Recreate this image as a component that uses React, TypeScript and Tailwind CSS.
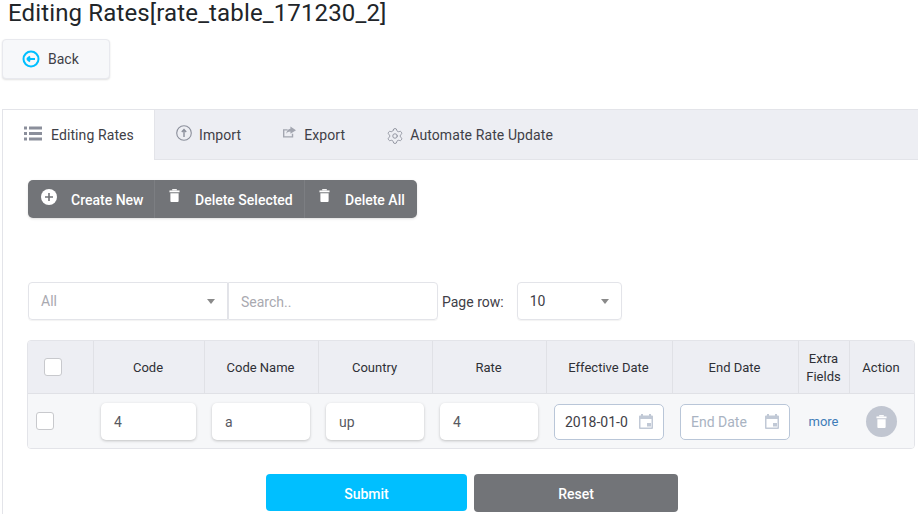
import { Settings } from "lucide-react";

const COLS = "grid grid-cols-[66px_111px_114px_114px_114px_126px_126px_51px_1fr]";

const TrashIcon = ({ className }: { className?: string }) => (
  <svg viewBox="0 0 12 14" className={className} fill="currentColor">
    <rect x="3.5" y="0" width="5" height="1.5" />
    <rect x="0.5" y="1.5" width="11" height="2" />
    <path d="M1.5 4.5h9V13a1 1 0 0 1-1 1h-7a1 1 0 0 1-1-1z" />
  </svg>
);

const CalendarIcon = () => (
  <svg viewBox="0 0 14 15" className="h-[15px] w-[14px] text-[#c1c9d6]" fill="currentColor">
    <path d="M2 0h2v1.5h6V0h2v1.5h1a1 1 0 0 1 1 1V14a1 1 0 0 1-1 1H1a1 1 0 0 1-1-1V2.500a1 1 0 0 1 1-1h1zM1.500 5v8.500h11V5z" />
    <rect x="8" y="9" width="4" height="3.500" />
  </svg>
);

const Caret = () => <span className="h-0 w-0 border-x-[4px] border-t-[5px] border-x-transparent border-t-[#8a8a8a]" />;

function Toolbar() {
  return (
    <div className="flex h-[38px] w-[389px] rounded-[5px] bg-[#727478] text-sm font-medium text-white shadow-sm">
      <div className="flex w-[127px] items-center border-r border-[#7c7e82] pl-[13px] pt-[2px]">
        <svg viewBox="0 0 16 16" className="mb-[6px] h-4 w-4">
          <circle cx="8" cy="8" r="8" fill="#ffffff" />
          <path d="M8 4v8M4 8h8" stroke="#727478" strokeWidth="1.600" />
        </svg>
        <span className="ml-[14px]">Create New</span>
      </div>
      <div className="flex w-[150px] items-center border-r border-[#7c7e82] pl-[14px] pt-[2px]">
        <TrashIcon className="mb-[10px] h-[13px] w-[11px]" />
        <span className="ml-[15px]">Delete Selected</span>
      </div>
      <div className="flex items-center pl-[14px] pt-[2px]">
        <TrashIcon className="mb-[10px] h-[13px] w-[11px]" />
        <span className="ml-[15px]">Delete All</span>
      </div>
    </div>
  );
}

function TextCell({ value }: { value: string }) {
  return (
    <div className="flex items-center pl-[7px] pr-[9px]">
      <div className="flex h-[37px] w-full items-center rounded-[5px] bg-white pl-[13px] text-sm text-[#575962] shadow-[0_1px_3px_rgba(0,0,0,0.22)]">
        {value}
      </div>
    </div>
  );
}

function DateCell({ value, placeholder }: { value?: string; placeholder?: string }) {
  return (
    <div className="flex items-center justify-center pr-[2px]">
      <div className="flex h-[36px] w-[110px] items-center justify-between rounded-[5px] border border-[#b9c6d8] bg-white pl-[10px] pr-[10px] text-sm">
        <span className={value ? "text-[#3f4047]" : "text-[#a9b3c2]"}>{value ?? placeholder}</span>
        <CalendarIcon />
      </div>
    </div>
  );
}

export default function App() {
  return (
    <div className="h-[514px] w-[918px] overflow-hidden bg-white font-['Roboto',sans-serif] text-[#212529]">
      <h1 className="pl-[8px] text-2xl leading-[26px] tracking-[0.14px] text-[#212529]">Editing Rates[rate_table_171230_2]</h1>
      <button className="mt-[13px] ml-[2px] flex h-[40px] w-[108px] items-center rounded-[4px] border border-[#e8e9ee] bg-[#f7f8fa] pl-[19px] text-sm text-[#3f4047] shadow-[0_1px_2px_rgba(0,0,0,0.12)]">
        <svg viewBox="0 0 18 18" className="h-[18px] w-[18px]" fill="none">
          <circle cx="9" cy="9" r="7.500" stroke="#00bfff" strokeWidth="2" />
          <path d="M5 9h8M5 9l3-2.500M5 9l3 2.500" stroke="#00bfff" strokeWidth="2" />
        </svg>
        <span className="ml-[8px]">Back</span>
      </button>

      <div className="mt-[30px] ml-[2px] h-[405px] border-l border-t border-[#e3e4e9]">
        <div className="flex h-[50px] text-sm tracking-[0.1px] text-[#3f4047]">
          <div className="flex w-[152px] items-center rounded-tl-[4px] border-r border-[#e3e4e9] bg-white pl-[21px]">
            <svg viewBox="0 0 18 14" className="mb-[3px] h-[15px] w-[18px] fill-[#8b8f9b]">
              <rect x="0" y="0" width="3" height="3" />
              <rect x="5" y="0" width="13" height="3" />
              <rect x="0" y="5.500" width="3" height="3" />
              <rect x="5" y="5.500" width="13" height="3" />
              <rect x="0" y="11" width="3" height="3" />
              <rect x="5" y="11" width="13" height="3" />
            </svg>
            <span className="ml-[9px]">Editing Rates</span>
          </div>
          <div className="flex flex-1 items-center border-b border-[#e3e4e9] bg-[#edeef3] pl-[21px]">
            <svg viewBox="0 0 16 16" className="mb-[3px] h-4 w-4" fill="none" stroke="#8b8f9b">
              <circle cx="8" cy="8" r="7.300" strokeWidth="1.100" />
              <path d="M8 12V5M5.800 7L8 4.500 10.200 7" strokeWidth="1.400" />
            </svg>
            <span className="ml-[7px]">Import</span>
            <svg viewBox="0 0 14 12" className="mb-[6px] ml-[42px] h-[12px] w-[13px] fill-[#a3a6b0]">
              <path d="M0 3h5v1.500H1.500v6h8V8H11v4H0z" />
              <path d="M8 0l6 4-6 4V5.500C6 5.500 4.500 6.300 3.500 8 3.700 5 5.300 3 8 2.500z" />
            </svg>
            <span className="ml-[8px]">Export</span>
            <Settings size={18} strokeWidth={1.200} className="ml-[41px] mt-[2px] text-[#8b8f9b]" />
            <span className="ml-[6px]">Automate Rate Update</span>
          </div>
        </div>

        <div className="pl-[25px] pt-[20px]">
          <Toolbar />

          <div className="mt-[64px] flex h-[38px] items-center text-sm">
            <div className="flex h-[38px] w-[200px] items-center justify-between rounded-l-[4px] border border-[#e3e4e9] pl-[12px] pr-[12px] text-[#a9a9b0] shadow-[0_1px_1px_rgba(0,0,0,0.05)]">
              All
              <Caret />
            </div>
            <div className="flex h-[38px] w-[210px] items-center rounded-r-[4px] border border-[#e3e4e9] pl-[12px] pt-[2px] text-[#a9a9b0] shadow-[0_1px_1px_rgba(0,0,0,0.05)]">
              Search..
            </div>
            <span className="ml-[4px] pt-[2px] text-[#3f4047]">Page row:</span>
            <div className="ml-[13px] flex h-[38px] w-[105px] items-center justify-between rounded-[4px] border border-[#e3e4e9] pl-[12px] pr-[12px] text-[#3f4047] shadow-[0_1px_1px_rgba(0,0,0,0.05)]">
              10
              <Caret />
            </div>
          </div>

          <div className="ml-[-1px] mt-[20px] w-[888px] overflow-hidden rounded-[4px] border border-[#e3e4e9] text-[13px] text-[#2f3036]">
            <div className={`${COLS} h-[53px] border-b border-[#e0e1e6] bg-[#edeef3] text-center`}>
              <div className="flex items-center justify-center border-r border-[#e0e1e6]">
                <span className="mr-[15px] h-[18px] w-[18px] rounded-[3px] border border-[#c8c9cd] bg-white" />
              </div>
              {["Code", "Code Name", "Country", "Rate", "Effective Date", "End Date"].map((h) => (
                <div key={h} className="flex items-center justify-center border-r border-[#e0e1e6] pr-[2px] pt-[2px]">{h}</div>
              ))}
              <div className="flex items-center justify-center border-r border-[#e0e1e6] pr-[1px] pt-[2px] leading-[18px]">Extra<br />Fields</div>
              <div className="flex items-center justify-center pr-[2px] pt-[2px]">Action</div>
            </div>
            <div className={`${COLS} h-[54px] bg-[#f6f7f9] pt-[1px]`}>
              <div className="flex items-center">
                <span className="mb-[1px] ml-[8px] h-[18px] w-[18px] rounded-[3px] border border-[#c8c9cd] bg-white" />
              </div>
              <TextCell value="4" />
              <TextCell value="a" />
              <TextCell value="up" />
              <TextCell value="4" />
              <DateCell value="2018-01-0" />
              <DateCell placeholder="End Date" />
              <div className="flex items-center justify-center pr-[2px] text-[#3f7cb8]">more</div>
              <div className="flex items-center justify-center pr-[2px]">
                <span className="flex h-[31px] w-[31px] items-center justify-center rounded-full bg-[#c1c6d1] text-white">
                  <TrashIcon className="h-[13px] w-[11px]" />
                </span>
              </div>
            </div>
          </div>

          <div className="mt-[25px] flex text-sm font-medium text-white">
            <button className="ml-[238px] h-[37px] w-[201px] rounded-[4px] bg-[#00bfff] pt-[2px]">Submit</button>
            <button className="ml-[7px] h-[38px] w-[204px] rounded-[4px] bg-[#727478] pt-[2px]">Reset</button>
          </div>
        </div>
      </div>
    </div>
  );
}
